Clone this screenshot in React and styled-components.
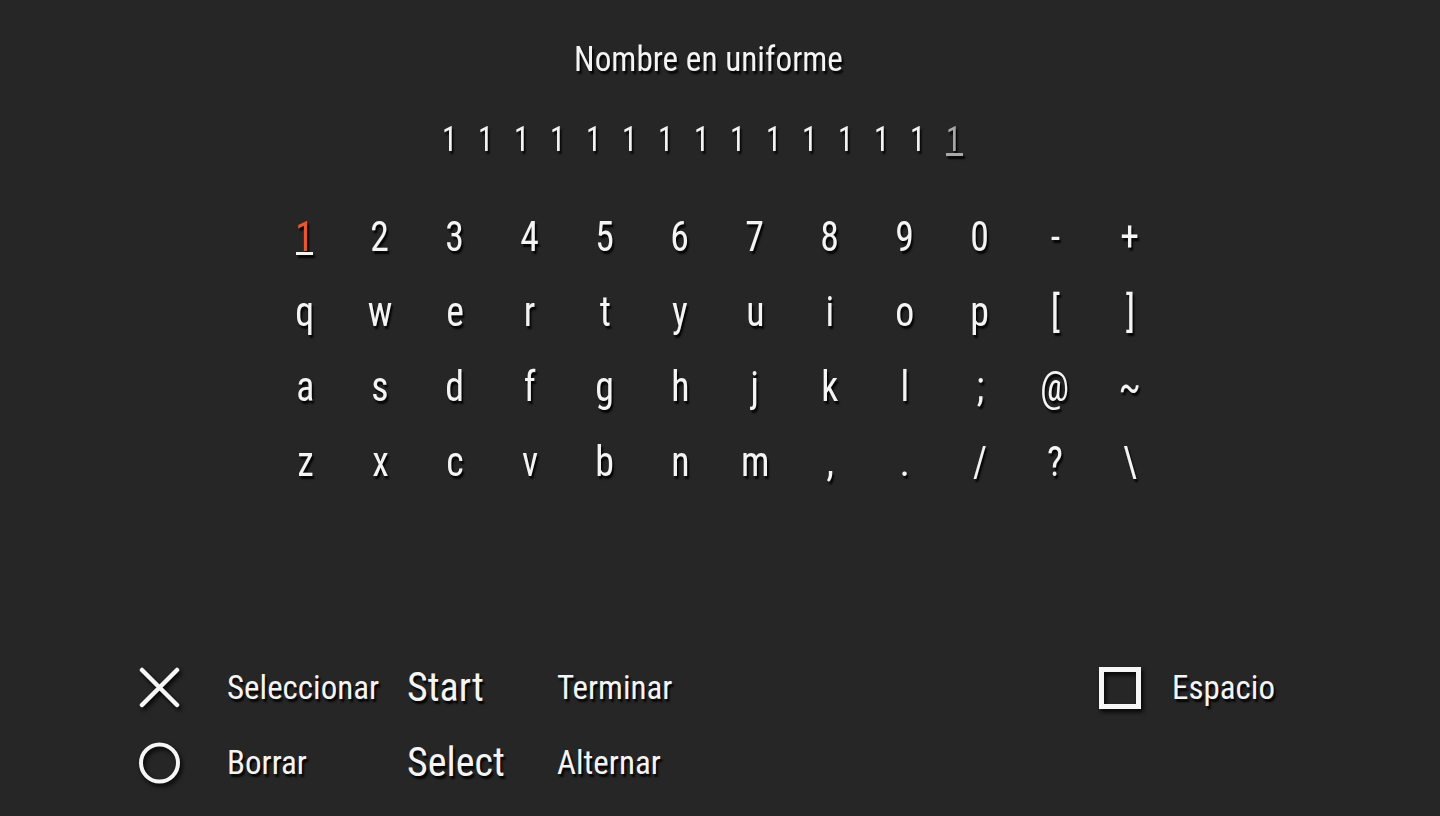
import React from 'react';
import styled, { createGlobalStyle, css } from 'styled-components';

const GlobalStyle = createGlobalStyle`
    html, body {
        margin: 0;
        padding: 0;
        background: #262626;
    }
    body {
        font-family: "Roboto Condensed", Roboto, "Liberation Sans", sans-serif;
        color: #f4f4f4;
    }
`;

const shadow = css`
    text-shadow: 2px 3px 2px rgba(0, 0, 0, 0.9);
`;

const Screen = styled.div`
    width: 1440px;
    height: 816px;
    display: flex;
    flex-direction: column;
    align-items: center;
    overflow: hidden;
`;

// no condensed face installed, so squeeze Roboto a little
const Narrow = styled.span`
    display: inline-block;
    transform: scaleX(${p => p.$x || 0.88});
    transform-origin: center;
    white-space: nowrap;
`;

const Title = styled.div`
    margin-top: 40px;
    margin-right: 22px;
    height: 40px;
    line-height: 40px;
    font-size: 35px;
    ${shadow}
`;

const NameRow = styled.div`
    margin-top: 40px;
    display: flex;
    height: 40px;
    line-height: 40px;
    font-size: 35px;
    ${shadow}
`;

const NameCell = styled.div`
    width: 36px;
    text-align: center;
    color: ${p => (p.$cursor ? '#a8a8a8' : '#f4f4f4')};
`;

const Mark = styled.span`
    position: relative;
    display: inline-block;
    &::after {
        content: '';
        position: absolute;
        left: 50%;
        width: ${p => p.$w}px;
        margin-left: ${p => -p.$w / 2}px;
        bottom: ${p => p.$b}px;
        height: 3px;
        background: ${p => p.$line};
        box-shadow: 2px 3px 2px rgba(0, 0, 0, 0.9);
    }
`;

const Keyboard = styled.div`
    margin-top: 38px;
    margin-right: 5px;
    display: grid;
    grid-template-columns: repeat(12, 75px);
    grid-auto-rows: 75px;
`;

const Key = styled.div`
    display: flex;
    align-items: center;
    justify-content: center;
    font-size: 43px;
    color: ${p => (p.$active ? '#e5572f' : '#f4f4f4')};
    ${shadow}
`;

const Footer = styled.div`
    margin-top: auto;
    margin-bottom: 16px;
    width: 100%;
    box-sizing: border-box;
    padding-left: 139px;
    display: flex;
    align-items: flex-start;
`;

const Legend = styled.div`
    display: grid;
    grid-template-columns: 88px 180px 150px 200px;
    grid-auto-rows: 75px;
`;

const Cell = styled.div`
    display: flex;
    align-items: center;
    white-space: nowrap;
    font-size: ${p => (p.$big ? 40 : 33)}px;
    ${shadow}
`;

const IconCell = styled.div`
    display: flex;
    align-items: center;
    svg {
        filter: drop-shadow(2px 3px 2px rgba(0, 0, 0, 0.9));
    }
`;

const SpaceHint = styled.div`
    margin-left: auto;
    margin-right: 165px;
    height: 75px;
    display: flex;
    align-items: center;
    gap: 31px;
`;

const CrossIcon = () => (
    <svg width="42" height="42" viewBox="0 0 42 42">
        <path d="M3 3 L38 38 M38 3 L3 38" stroke="#f6f6f6" strokeWidth="4.5" strokeLinecap="round" fill="none" />
    </svg>
);

const CircleIcon = () => (
    <svg width="42" height="42" viewBox="0 0 42 42">
        <circle cx="20.5" cy="21" r="18.5" stroke="#f6f6f6" strokeWidth="4" fill="none" />
    </svg>
);

const SquareIcon = () => (
    <svg width="42" height="42" viewBox="0 0 42 42">
        <rect x="2.5" y="2.5" width="37" height="37" stroke="#f6f6f6" strokeWidth="5" fill="none" />
    </svg>
);

const rows = [
    ['1', '2', '3', '4', '5', '6', '7', '8', '9', '0', '-', '+'],
    ['q', 'w', 'e', 'r', 't', 'y', 'u', 'i', 'o', 'p', '[', ']'],
    ['a', 's', 'd', 'f', 'g', 'h', 'j', 'k', 'l', ';', '@', '~'],
    ['z', 'x', 'c', 'v', 'b', 'n', 'm', ',', '.', '/', '?', '\\'],
];

const name = Array.from({ length: 16 }, (_, i) => (i < 15 ? '1' : ''));

const App = () => {
    return (
        <Screen>
            <GlobalStyle />
            <Title><Narrow $x={0.95}>Nombre en uniforme</Narrow></Title>

            <NameRow>
                {name.map((c, i) => (
                    <NameCell key={i} $cursor={i === 14}>
                        {i === 14
                            ? <Mark $w={17} $b={4} $line="#a8a8a8"><Narrow>{c}</Narrow></Mark>
                            : <Narrow>{c}</Narrow>}
                    </NameCell>
                ))}
            </NameRow>

            <Keyboard>
                {rows.flat().map((k, i) => (
                    <Key key={i} $active={i === 0}>
                        {i === 0
                            ? <Mark $w={17} $b={6} $line="#f4f4f4"><Narrow>{k}</Narrow></Mark>
                            : <Narrow>{k}</Narrow>}
                    </Key>
                ))}
            </Keyboard>

            <Footer>
                <Legend>
                    <IconCell><CrossIcon /></IconCell>
                    <Cell>Seleccionar</Cell>
                    <Cell $big>Start</Cell>
                    <Cell>Terminar</Cell>

                    <IconCell><CircleIcon /></IconCell>
                    <Cell>Borrar</Cell>
                    <Cell $big>Select</Cell>
                    <Cell>Alternar</Cell>
                </Legend>

                <SpaceHint>
                    <IconCell><SquareIcon /></IconCell>
                    <Cell>Espacio</Cell>
                </SpaceHint>
            </Footer>
        </Screen>
    );
};

export default App;
